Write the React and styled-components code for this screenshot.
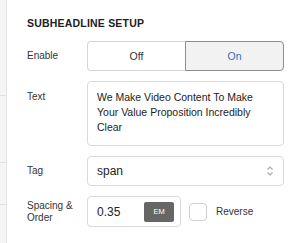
import React from 'react'
import styled, { createGlobalStyle } from 'styled-components'

const GlobalStyle = createGlobalStyle`
  html, body { margin: 0; padding: 0; background: #fff; }
  body { font-family: "Liberation Sans", Arial, sans-serif; color: #333; }
`

const Page = styled.div`
  display: flex;
  width: 293px;
  height: 243px;
  overflow: hidden;
`

const Strip = styled.div`
  width: 6px;
  background: #f4f4f4;
  border-right: 1px solid #e4e4e4;
  display: flex;
  flex-direction: column;
`

const StripCell = styled.div`
  height: ${p => p.h}px;
  border-bottom: 1px solid #e2e2e2;
  flex: ${p => (p.h ? 'none' : 1)};
  border-bottom-width: ${p => (p.h ? 1 : 0)}px;
`

const Panel = styled.div`
  flex: 1;
  padding: 17px 9px 0 20px;
`

const Heading = styled.h3`
  margin: 0 0 12px;
  font-size: 10.5px;
  font-weight: bold;
  letter-spacing: 0.2px;
  color: #222;
  line-height: 12px;
`

const Row = styled.div`
  display: grid;
  grid-template-columns: 60px 197px;
  align-items: ${p => (p.top ? 'start' : 'center')};
  margin-bottom: 10px;
`

const Label = styled.div`
  font-size: 10px;
  line-height: 12px;
  color: #333;
  padding-top: ${p => (p.top ? 10 : 0)}px;
`

const Toggle = styled.div`
  display: flex;
  height: 30px;
`

const ToggleBtn = styled.div`
  flex: 1;
  display: flex;
  align-items: center;
  justify-content: center;
  font-size: 10.5px;
  border: 1px solid ${p => (p.active ? '#8d8d8d' : '#d6d6d6')};
  background: ${p => (p.active ? '#f2f2f2' : '#fff')};
  color: ${p => (p.active ? '#2a6fb4' : '#333')};
  border-radius: ${p => (p.active ? '0 4px 4px 0' : '4px 0 0 4px')};
  border-right-width: ${p => (p.active ? 1 : 0)}px;
`

const TextBox = styled.div`
  height: 65px;
  box-sizing: border-box;
  border: 1px solid #d9d9d9;
  border-radius: 4px;
  padding: 8px 9px;
  font-size: 10.5px;
  line-height: 15px;
  color: #222;
`

const Select = styled.div`
  height: 30px;
  box-sizing: border-box;
  border: 1px solid #d9d9d9;
  border-radius: 4px;
  padding: 0 9px;
  display: flex;
  align-items: center;
  justify-content: space-between;
  font-size: 12px;
  color: #222;
`

const Controls = styled.div`
  display: flex;
  align-items: center;
  gap: 8px;
`

const NumberBox = styled.div`
  width: 94px;
  height: 31px;
  box-sizing: border-box;
  border: 1px solid #d9d9d9;
  border-radius: 4px;
  padding: 0 6px 0 9px;
  display: flex;
  align-items: center;
  justify-content: space-between;
  font-size: 12px;
  color: #222;
`

const Unit = styled.span`
  width: 30px;
  height: 20px;
  border-radius: 2px;
  background: #666;
  color: #fff;
  font-size: 7.5px;
  display: flex;
  align-items: center;
  justify-content: center;
`

const Check = styled.span`
  width: 16px;
  height: 16px;
  border: 1px solid #cfcfcf;
  border-radius: 4px;
  background: #fff;
`

const CheckLabel = styled.span`
  font-size: 10px;
  color: #333;
  margin-left: 1px;
`

const Arrows = () => (
  <svg width="8" height="12" viewBox="0 0 8 12">
    <path d="M1.5 4.5 L4 2 L6.5 4.5 M1.5 7.5 L4 10 L6.5 7.5" fill="none" stroke="#aaa" strokeWidth="1.2" />
  </svg>
)

export default function App() {
  return (
    <Page>
      <GlobalStyle />
      <Strip>
        <StripCell h={95} />
        <StripCell h={66} />
        <StripCell h={41} />
        <StripCell />
      </Strip>
      <Panel>
        <Heading>SUBHEADLINE SETUP</Heading>
        <Row>
          <Label>Enable</Label>
          <Toggle>
            <ToggleBtn>Off</ToggleBtn>
            <ToggleBtn active>On</ToggleBtn>
          </Toggle>
        </Row>
        <Row top>
          <Label top>Text</Label>
          <TextBox>We Make Video Content To Make Your Value Proposition Incredibly Clear</TextBox>
        </Row>
        <Row>
          <Label>Tag</Label>
          <Select>
            span
            <Arrows />
          </Select>
        </Row>
        <Row>
          <Label>Spacing &amp;<br />Order</Label>
          <Controls>
            <NumberBox>
              0.35
              <Unit>EM</Unit>
            </NumberBox>
            <Check />
            <CheckLabel>Reverse</CheckLabel>
          </Controls>
        </Row>
      </Panel>
    </Page>
  )
}
